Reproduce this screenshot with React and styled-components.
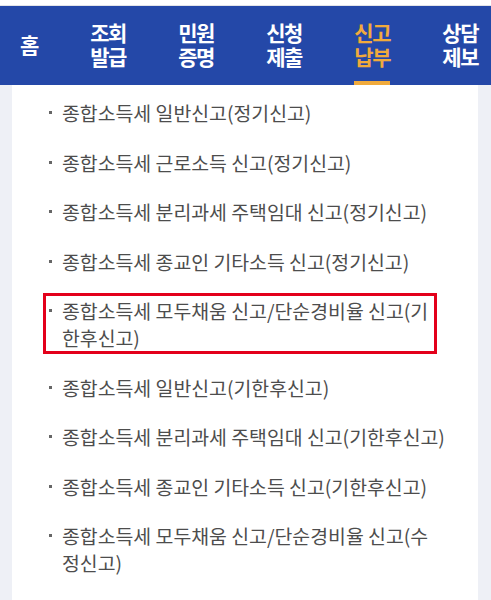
import React from "react";
import styled, { createGlobalStyle } from "styled-components";

const Global = createGlobalStyle`
  html, body { margin: 0; padding: 0; background: #eef0f6; }
  body { font-family: "Noto Sans CJK KR", "Noto Sans", sans-serif; }
  #root { min-height: 600px; display: flex; flex-direction: column; }
`;

const Page = styled.div`
  display: flex;
  flex-direction: column;
  min-height: 600px;
  flex: 1;
`;

const TopStrip = styled.div`
  height: 5px;
  background: #ffffff;
  border-bottom: 1px solid #e3e4e8;
`;

const Nav = styled.nav`
  height: 79px;
  background: #2448a8;
  display: flex;
  justify-content: space-between;
  padding: 0 13px 0 20px;
`;

const NavItem = styled.div`
  display: flex;
  align-items: center;
  justify-content: center;
  text-align: center;
  font-size: 21px;
  font-weight: 700;
  line-height: 24px;
  letter-spacing: -1.5px;
  color: ${(p) => (p.$active ? "#f0aa3c" : "#ffffff")};
  box-shadow: ${(p) => (p.$active ? "inset 0 -4px 0 #f0aa3c" : "none")};
  padding-bottom: 3px;
`;

const Panel = styled.main`
  flex: 1;
  background: #ffffff;
  margin: 0 13px 0 12px;
`;

const List = styled.ul`
  list-style: none;
  margin: 0;
  padding: 3px 20px 0 37px;
`;

const Item = styled.li`
  padding: 11px 0 11.5px;
`;

const Body = styled.div`
  display: flex;
  align-items: flex-start;
  width: fit-content;
  ${(p) =>
    p.$highlight &&
    `
    border: 3px solid #e3001b;
    padding: 1px 6px 0 3px;
    margin: -4px 0 -3px -6px;
  `}
`;

const Dot = styled.span`
  flex: none;
  width: 3px;
  height: 3px;
  background: #666666;
  margin: 12px 10px 0 0;
`;

const Text = styled.span`
  font-size: 19.4px;
  line-height: 27px;
  color: #4d4d4d;
  white-space: nowrap;
`;

const navItems = [
  ["홈"],
  ["조회", "발급"],
  ["민원", "증명"],
  ["신청", "제출"],
  ["신고", "납부"],
  ["상담", "제보"],
];

const items = [
  ["종합소득세 일반신고(정기신고)"],
  ["종합소득세 근로소득 신고(정기신고)"],
  ["종합소득세 분리과세 주택임대 신고(정기신고)"],
  ["종합소득세 종교인 기타소득 신고(정기신고)"],
  ["종합소득세 모두채움 신고/단순경비율 신고(기", "한후신고)"],
  ["종합소득세 일반신고(기한후신고)"],
  ["종합소득세 분리과세 주택임대 신고(기한후신고)"],
  ["종합소득세 종교인 기타소득 신고(기한후신고)"],
  ["종합소득세 모두채움 신고/단순경비율 신고(수", "정신고)"],
];

export default function App() {
  return (
    <Page>
      <Global />
      <TopStrip />
      <Nav>
        {navItems.map((lines, i) => (
          <NavItem key={i} $active={i === 4}>
            <span>
              {lines.map((l, j) => (
                <React.Fragment key={j}>
                  {j > 0 && <br />}
                  {l}
                </React.Fragment>
              ))}
            </span>
          </NavItem>
        ))}
      </Nav>
      <Panel>
        <List>
          {items.map((lines, i) => (
            <Item key={i}>
              <Body $highlight={i === 4}>
                <Dot />
                <Text>
                  {lines.map((l, j) => (
                    <React.Fragment key={j}>
                      {j > 0 && <br />}
                      {l}
                    </React.Fragment>
                  ))}
                </Text>
              </Body>
            </Item>
          ))}
        </List>
      </Panel>
    </Page>
  );
}
